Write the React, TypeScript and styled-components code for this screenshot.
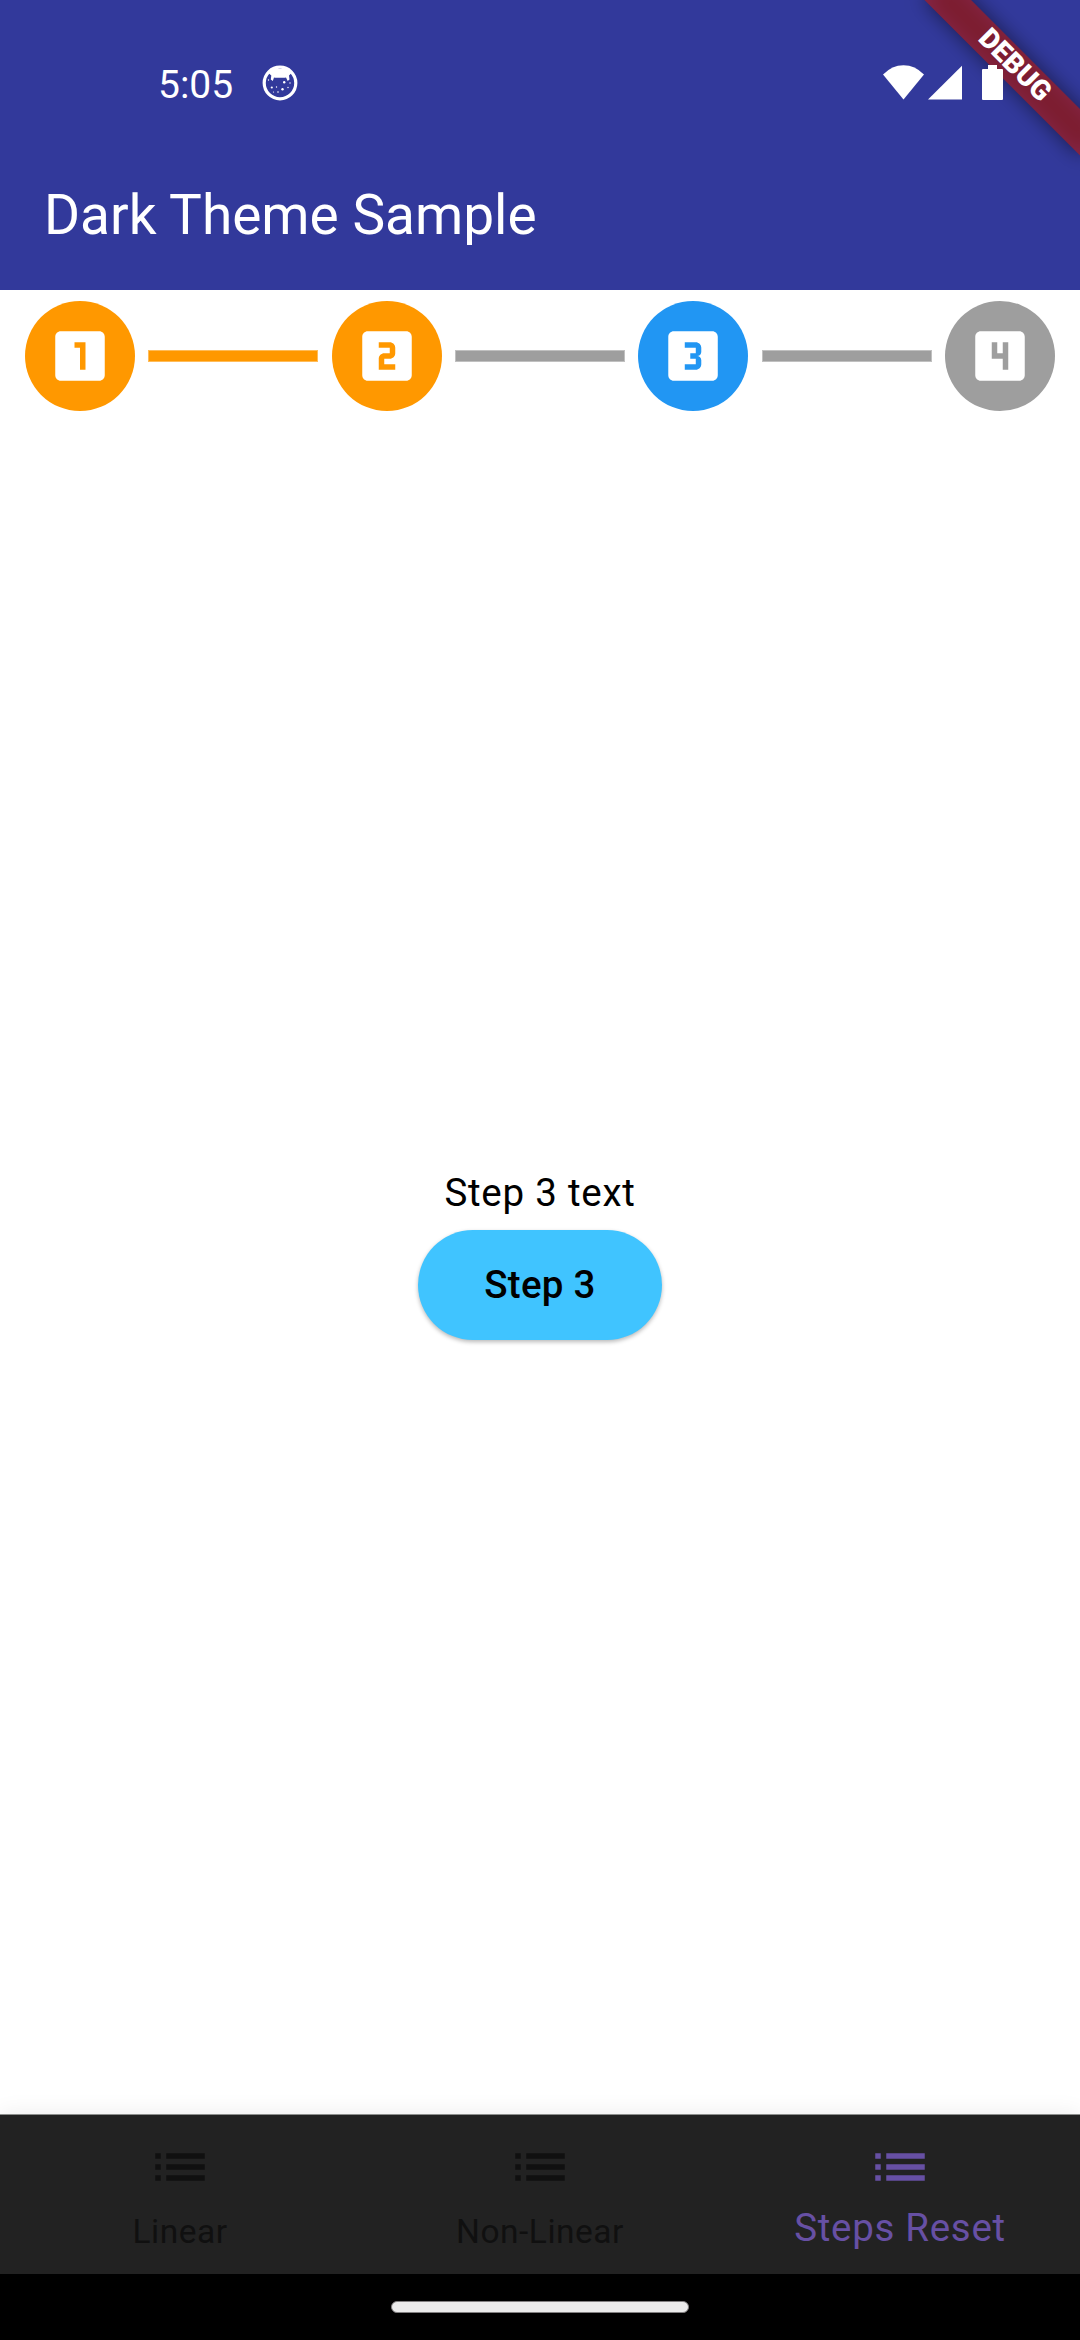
import React from "react";
import styled, { createGlobalStyle } from "styled-components";

const GlobalStyle = createGlobalStyle`
  * { box-sizing: border-box; }
  body { margin: 0; background: #fff; font-family: Roboto, "Noto Sans", sans-serif; }
`;

const Screen = styled.div`
  position: relative;
  display: flex;
  flex-direction: column;
  width: 1080px;
  height: 2340px;
  overflow: hidden;
  background: #fff;
`;

const Header = styled.header`
  display: flex;
  flex-direction: column;
  height: 290px;
  flex: none;
  background: #32399b;
  color: #fff;
`;

const StatusBar = styled.div`
  position: relative;
  z-index: 2;
  display: flex;
  align-items: center;
  height: 136px;
  padding: 30px 77px 0 158px;
`;

const Clock = styled.span`
  padding-top: 4px;
  font-size: 39px;
  line-height: 46px;
`;

const NotificationIcon = styled.svg`
  width: 36px;
  height: 36px;
  margin-left: 28.5px;
`;

const SystemIcons = styled.svg`
  width: 120px;
  height: 36px;
  margin-left: auto;
`;

const AppBar = styled.div`
  display: flex;
  align-items: center;
  height: 154px;
  padding: 4px 44px 0;
`;

const Title = styled.h1`
  margin: 0;
  font-size: 55px;
  font-weight: 400;
  line-height: 70px;
`;

const BannerRibbon = styled.div`
  position: absolute;
  z-index: 1;
  left: 970px;
  top: 77px;
  display: flex;
  align-items: center;
  justify-content: center;
  width: 220px;
  height: 33px;
  padding-bottom: 3px;
  transform: rotate(45deg);
  transform-origin: 110px -77px;
  color: #fff;
  font-size: 28px;
  font-weight: 900;
  line-height: 30px;

  &::before,
  &::after {
    content: "";
    position: absolute;
    inset: 0;
  }
  &::before {
    z-index: -2;
    background: rgba(0, 0, 0, 0.5);
    filter: blur(10px);
  }
  &::after {
    z-index: -1;
    background: rgba(183, 28, 28, 0.627);
  }
`;

const Stepper = styled.div`
  display: flex;
  align-items: center;
  gap: 13.2px;
  height: 132px;
  padding: 0 25px;
`;

const StepCircle = styled.div<{ $color: string }>`
  display: flex;
  align-items: center;
  justify-content: center;
  flex: none;
  width: 110px;
  height: 110px;
  border-radius: 50%;
  background: ${(p) => p.$color};
`;

const StepLine = styled.div<{ $color: string }>`
  flex: 1;
  height: 12px;
  background: ${(p) => p.$color};
  box-shadow: inset 0 0 0 1px rgba(255, 255, 255, 0.35);
`;

const Icon = styled.svg`
  display: block;
  width: 66px;
  height: 66px;
  fill: currentColor;
`;

const StepIcon = styled(Icon)`
  color: #fff;
`;

const Body = styled.main`
  display: flex;
  flex: 1;
  flex-direction: column;
  align-items: center;
  justify-content: center;
  padding-bottom: 32px;
`;

const StepText = styled.p`
  margin: 0 0 10px;
  color: #000;
  font-size: 38.5px;
  line-height: 55px;
  letter-spacing: 0.75px;
`;

const StepButton = styled.button`
  width: 244px;
  height: 110px;
  padding: 0;
  border: 0;
  border-radius: 55px;
  background: #40c4ff;
  box-shadow: 0 2px 4px rgba(0, 0, 0, 0.28);
  color: #000;
  font-family: inherit;
  font-size: 38.5px;
  font-weight: 500;
  letter-spacing: 0.275px;
`;

const BottomNav = styled.nav`
  display: grid;
  grid-template-columns: repeat(3, 1fr);
  flex: none;
  height: 160px;
  border-top: 1px solid #8d8f8d;
  background: #222;
  box-shadow: 0 0 22px rgba(0, 0, 0, 0.08);
`;

const NavItem = styled.div<{ $active?: boolean }>`
  display: flex;
  flex-direction: column;
  align-items: center;
  padding-top: 19px;
  color: ${(p) => (p.$active ? "#6750a4" : "#101010")};
`;

const NavLabel = styled.span<{ $active?: boolean }>`
  margin-top: ${(p) => (p.$active ? "0" : "8px")};
  font-size: ${(p) => (p.$active ? "38.5px" : "33.5px")};
  line-height: ${(p) => (p.$active ? "55px" : "48px")};
  letter-spacing: ${(p) => (p.$active ? "0.7px" : "0.5px")};
`;

const GestureBar = styled.div`
  display: flex;
  align-items: center;
  justify-content: center;
  flex: none;
  height: 66px;
  background: #000;
`;

const Handle = styled.div`
  width: 298px;
  height: 12px;
  border: 1px solid #828081;
  border-radius: 6px;
  background: #ebebeb;
`;

const DONE = "#ff9800";
const ACTIVE = "#2196f3";
const IDLE = "#9e9e9e";

const steps = [
  {
    color: DONE,
    line: DONE,
    path: "M19 3H5c-1.1 0-2 .9-2 2v14c0 1.1.9 2 2 2h14c1.1 0 2-.9 2-2V5c0-1.1-.9-2-2-2zm-5 14h-2V9h-2V7h4v10z",
  },
  {
    color: DONE,
    line: IDLE,
    path: "M19 3H5c-1.1 0-2 .9-2 2v14c0 1.1.9 2 2 2h14c1.1 0 2-.9 2-2V5c0-1.1-.9-2-2-2zm-4 8c0 1.11-.9 2-2 2h-2v2h4v2H9v-4c0-1.11.9-2 2-2h2V9H9V7h4c1.1 0 2 .89 2 2v2z",
  },
  {
    color: ACTIVE,
    line: IDLE,
    path: "M19.01 3h-14c-1.1 0-2 .9-2 2v14c0 1.1.9 2 2 2h14c1.1 0 2-.9 2-2V5c0-1.1-.9-2-2-2zm-4 7.5c0 .83-.67 1.5-1.5 1.5.83 0 1.5.67 1.5 1.5V15c0 1.11-.9 2-2 2h-4v-2h4v-2h-2v-2h2V9h-4V7h4c1.1 0 2 .89 2 2v1.5z",
  },
  {
    color: IDLE,
    line: null,
    path: "M19 3H5c-1.1 0-2 .9-2 2v14c0 1.1.9 2 2 2h14c1.1 0 2-.9 2-2V5c0-1.1-.9-2-2-2zm-4 14h-2v-4H9V7h2v4h2V7h2v10z",
  },
];

const navItems = ["Linear", "Non-Linear", "Steps Reset"];

export default function App() {
  return (
    <Screen>
      <GlobalStyle />
      <Header>
        <StatusBar>
          <Clock>5:05</Clock>
          <NotificationIcon viewBox="0 0 36 36">
            <circle cx="18" cy="18" r="15.800" fill="none" stroke="#fff" strokeWidth="3.2" />
            <path
              fill="#fff"
              d="M6.500 8 11 4h14l4.500 4-2.500 2.500 .5 4-1.800 1.500-1.700-3.500Q22 13 21 12.700h-6Q14 13 12 12.500L10.800 16 8.800 14.500 9.300 10.500z"
            />
            <g fill="#fff">
              <circle cx="22.200" cy="17.300" r="1.200" />
              <circle cx="9.800" cy="22.500" r="1.100" />
              <circle cx="20.500" cy="24.300" r="1.200" />
              <circle cx="14.500" cy="22" r=".7" />
              <circle cx="26" cy="22.500" r=".7" />
              <circle cx="16" cy="27" r=".8" />
              <circle cx="6.500" cy="15" r=".7" />
              <circle cx="28" cy="18" r=".7" />
              <circle cx="11.500" cy="27" r=".6" />
            </g>
          </NotificationIcon>
          <SystemIcons viewBox="0 0 120 36" fill="#fff">
            <path d="M0 9.500Q9 .2 20.500 .2T41 9.500L20.500 34.500z" />
            <path d="M45 34.500 79 .8v33.700z" />
            <path d="M105 0h9v4h5q1 0 1 1v29q0 1-1 1h-19q-1 0-1-1V5q0-1 1-1h5z" />
          </SystemIcons>
        </StatusBar>
        <AppBar>
          <Title>Dark Theme Sample</Title>
        </AppBar>
      </Header>
      <BannerRibbon>DEBUG</BannerRibbon>
      <Stepper>
        {steps.map((s, i) => (
          <React.Fragment key={i}>
            <StepCircle $color={s.color}>
              <StepIcon viewBox="0 0 24 24">
                <path d={s.path} />
              </StepIcon>
            </StepCircle>
            {s.line && <StepLine $color={s.line} />}
          </React.Fragment>
        ))}
      </Stepper>
      <Body>
        <StepText>Step 3 text</StepText>
        <StepButton>Step 3</StepButton>
      </Body>
      <BottomNav>
        {navItems.map((label, i) => (
          <NavItem key={label} $active={i === 2}>
            <Icon viewBox="0 0 24 24">
              <path d="M3 13h2v-2H3v2zm0 4h2v-2H3v2zm0-8h2V7H3v2zm4 4h14v-2H7v2zm0 4h14v-2H7v2zM7 7v2h14V7H7z" />
            </Icon>
            <NavLabel $active={i === 2}>{label}</NavLabel>
          </NavItem>
        ))}
      </BottomNav>
      <GestureBar>
        <Handle />
      </GestureBar>
    </Screen>
  );
}
